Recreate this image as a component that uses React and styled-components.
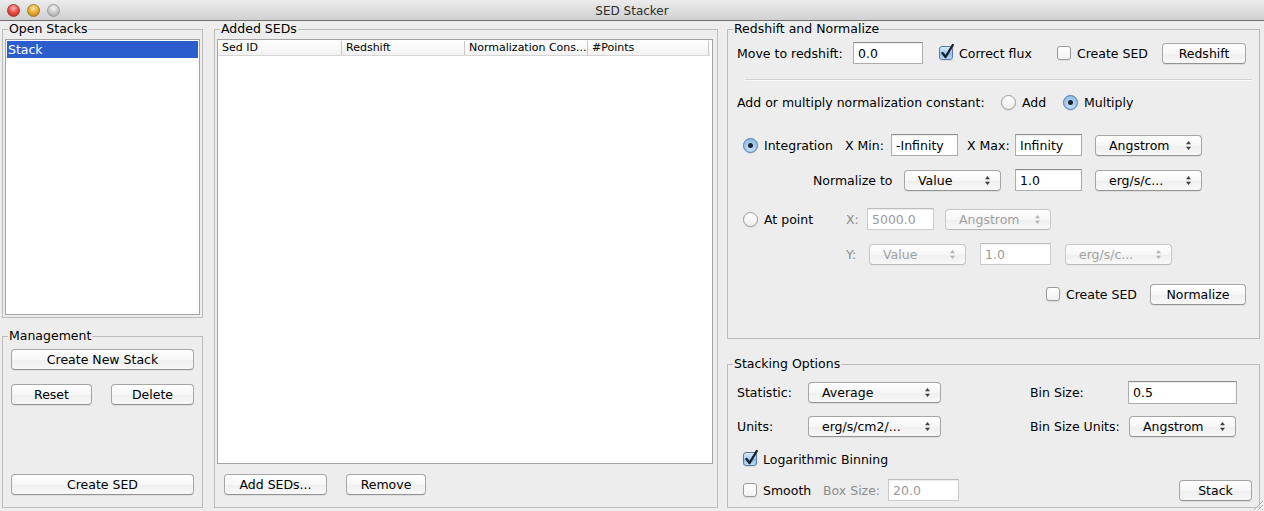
import React from 'react';
import styled, { createGlobalStyle } from 'styled-components';

const GlobalStyle = createGlobalStyle`
  html, body {
    margin: 0;
    padding: 0;
    background: #ededed;
    overflow: hidden;
  }
  body {
    font-family: "DejaVu Sans", "Liberation Sans", sans-serif;
    font-size: 12.5px;
    color: #000;
  }
  * { box-sizing: border-box; }
`;

const Window = styled.div`
  width: 1264px;
  height: 511px;
  display: flex;
  flex-direction: column;
  background: #ededed;
  position: relative;
  overflow: hidden;
`;

const TitleBar = styled.div`
  height: 21px;
  flex: none;
  display: grid;
  grid-template-columns: 1fr auto 1fr;
  align-items: center;
  background: linear-gradient(#ececec, #d0d0d0);
  border-bottom: 1px solid #6e6e6e;
`;

const Lights = styled.div`
  display: flex;
  gap: 7px;
  padding-left: 7px;
`;

const lightColors = {
  close: ['#ffb3ab', '#e2453c', '#a82a22', '#9c3a33'],
  min: ['#ffe6a0', '#e0a62c', '#ad7318', '#a57a2a'],
  zoom: ['#f4f4f4', '#c4c4c4', '#9a9a9a', '#9d9d9d'],
};

const Light = styled.span`
  width: 13px;
  height: 13px;
  border-radius: 50%;
  border: 1px solid ${p => lightColors[p.$kind][3]};
  background: radial-gradient(circle at 50% 30%, ${p => lightColors[p.$kind][0]} 0%, ${p => lightColors[p.$kind][1]} 55%, ${p => lightColors[p.$kind][2]} 100%);
`;

const Title = styled.div`
  font-size: 12px;
  color: #2e2e2e;
  padding-top: 1px;
`;

const Body = styled.div`
  flex: 1;
  display: flex;
  padding: 0 4px 3px 2px;
`;

const Column = styled.div`
  width: ${p => p.$w}px;
  margin-left: ${p => p.$ml || 0}px;
  display: flex;
  flex-direction: column;
  gap: ${p => p.$gap || 0}px;
  flex: none;
`;

const Group = styled.fieldset`
  margin: 0;
  padding: 0;
  min-width: 0;
  border: 1px solid #bcbcbc;
  height: ${p => p.$h}px;
  flex: none;
`;

const Legend = styled.legend`
  font-size: 12.5px;
  line-height: 16px;
  padding: 0 1px;
  margin-left: 5px;
  color: #000;
`;

// legend takes 16px, bottom border 1px
const GroupBody = styled.div`
  height: ${p => p.$h - 17}px;
  display: flex;
  flex-direction: column;
  padding: ${p => p.$pad};
`;

const ListBox = styled.div`
  flex: 1;
  background: #fff;
  border: 1px solid #a4a4a4;
  padding: 1px;
`;

const ListItem = styled.div`
  height: 17px;
  line-height: 17px;
  padding-left: 1px;
  background: ${p => (p.$selected ? '#2b5dcd' : 'transparent')};
  color: ${p => (p.$selected ? '#fff' : '#000')};
`;

const Table = styled.div`
  height: 425px;
  flex: none;
  background: #fff;
  border: 1px solid #a4a4a4;
  padding: 1px 2px 0 0;
  display: flex;
  flex-direction: column;
`;

const HeaderRow = styled.div`
  display: flex;
  height: 15px;
  background: linear-gradient(#ffffff, #f1f1f1);
  border-bottom: 1px solid #d6d6d6;
`;

const HeaderCell = styled.div`
  width: ${p => p.$w}px;
  flex: none;
  font-size: 11px;
  line-height: 14px;
  padding-left: 4px;
  border-right: 1px solid #c9c9c9;
  white-space: nowrap;
  overflow: hidden;
`;

const ButtonRow = styled.div`
  display: flex;
  justify-content: ${p => p.$justify || 'flex-start'};
  gap: ${p => p.$gap || 0}px;
  margin-top: ${p => p.$mt || 0}px;
  padding-left: ${p => p.$pl || 0}px;
`;

const Button = styled.button`
  font-family: inherit;
  font-size: 12.5px;
  color: #000;
  height: 21px;
  width: ${p => (p.$w ? `${p.$w}px` : '100%')};
  margin-left: ${p => (p.$ml === 'auto' ? 'auto' : `${p.$ml || 0}px`)};
  margin-top: ${p => (p.$mt === 'auto' ? 'auto' : `${p.$mt || 0}px`)};
  flex: none;
  padding: 0;
  border: 1px solid #a6a6a6;
  border-bottom-color: #929292;
  border-radius: 4px;
  background: linear-gradient(#ffffff, #f6f6f6 50%, #efefef 52%, #f8f8f8);
  box-shadow: 0 1px 1px rgba(0, 0, 0, 0.07);
`;

const Row = styled.div`
  display: flex;
  align-items: center;
  height: ${p => p.$h || 22}px;
  margin-top: ${p => p.$mt || 0}px;
  flex: none;
`;

const Label = styled.span`
  width: ${p => (p.$w ? `${p.$w}px` : 'auto')};
  margin-left: ${p => p.$ml || 0}px;
  flex: none;
  white-space: nowrap;
  color: ${p => (p.$muted ? '#8c8c8c' : '#000')};
`;

const Input = styled.input`
  font-family: inherit;
  font-size: 12.5px;
  width: ${p => p.$w}px;
  height: ${p => p.$h || 22}px;
  margin: 0 0 0 ${p => p.$ml || 0}px;
  padding: 0 0 0 4px;
  flex: none;
  background: #fff;
  color: ${p => (p.disabled ? '#9a9a9a' : '#000')};
  border: 1px solid ${p => (p.disabled ? '#cbcbcb' : '#adadad')};
  border-top-color: ${p => (p.disabled ? '#bdbdbd' : '#8c8c8c')};
  box-shadow: inset 0 1px 1px rgba(0, 0, 0, 0.08);
  outline: none;
`;

const PopUpBox = styled.div`
  width: ${p => p.$w}px;
  height: 21px;
  margin-left: ${p => p.$ml || 0}px;
  flex: none;
  display: flex;
  align-items: center;
  justify-content: space-between;
  padding: 0 9px 0 13px;
  border: 1px solid ${p => (p.$disabled ? '#c6c6c6' : '#a6a6a6')};
  border-bottom-color: ${p => (p.$disabled ? '#bcbcbc' : '#929292')};
  border-radius: 4px;
  background: linear-gradient(#ffffff, #f6f6f6 50%, #efefef 52%, #f8f8f8);
  box-shadow: 0 1px 1px rgba(0, 0, 0, ${p => (p.$disabled ? 0.03 : 0.07)});
  color: ${p => (p.$disabled ? '#a2a2a2' : '#000')};
  white-space: nowrap;
`;

const PopUp = ({ w, ml, disabled, children }) => (
  <PopUpBox $w={w} $ml={ml} $disabled={disabled}>
    <span>{children}</span>
    <svg width="7" height="11" viewBox="0 0 7 11">
      <path d="M3.5 1 L6 4.2 L1 4.2 Z M3.5 10 L6 6.8 L1 6.8 Z" fill={disabled ? '#b4b4b4' : '#404040'} />
    </svg>
  </PopUpBox>
);

const Choice = styled.label`
  display: flex;
  align-items: center;
  gap: 6px;
  width: ${p => (p.$w ? `${p.$w}px` : 'auto')};
  margin-left: ${p => p.$ml || 0}px;
  flex: none;
  white-space: nowrap;
`;

const Box = styled.span`
  position: relative;
  width: 14px;
  height: 14px;
  flex: none;
  border-radius: 3px;
  border: 1px solid ${p => (p.$on ? '#5a7aa6' : '#9a9a9a')};
  background: ${p => (p.$on
    ? 'linear-gradient(#d6e8fb, #a9ccf2 50%, #8dbbed 52%, #b8daf8)'
    : 'linear-gradient(#ffffff, #f0f0f0)')};
  box-shadow: 0 1px 1px rgba(0, 0, 0, 0.08);
`;

const Tick = styled.svg`
  position: absolute;
  left: 0;
  top: -4px;
`;

const Check = ({ checked, w, ml, children }) => (
  <Choice $w={w} $ml={ml}>
    <Box $on={checked}>
      {checked && (
        <Tick width="15" height="17" viewBox="0 0 15 17">
          <path d="M2.5 10 L5.6 14 L12.8 2" fill="none" stroke="#18202c" strokeWidth="2.4" strokeLinecap="round" strokeLinejoin="round" />
        </Tick>
      )}
    </Box>
    <span>{children}</span>
  </Choice>
);

const Circle = styled.span`
  width: 15px;
  height: 15px;
  flex: none;
  border-radius: 50%;
  display: flex;
  align-items: center;
  justify-content: center;
  border: 1px solid ${p => (p.$on ? '#5a7aa6' : '#9a9a9a')};
  background: ${p => (p.$on
    ? 'radial-gradient(circle at 50% 70%, #c9e2fb, #9cc5ef 60%, #7fb0e6)'
    : 'linear-gradient(#ffffff, #efefef)')};
  box-shadow: 0 1px 1px rgba(0, 0, 0, 0.08);
`;

const Dot = styled.span`
  width: 5px;
  height: 5px;
  border-radius: 50%;
  background: #1d2633;
`;

const Radio = ({ checked, w, ml, children }) => (
  <Choice $w={w} $ml={ml}>
    <Circle $on={checked}>{checked && <Dot />}</Circle>
    <span>{children}</span>
  </Choice>
);

const Separator = styled.div`
  height: 1px;
  margin: 15px 7px 0 8px;
  background: #d2d2d2;
  box-shadow: 0 1px 0 #f9f9f9;
  flex: none;
`;

const Grip = styled.svg`
  position: absolute;
  right: 0;
  bottom: 0;
`;

export default function App() {
  return (
    <>
      <GlobalStyle />
      <Window>
        <TitleBar>
          <Lights>
            <Light $kind="close" />
            <Light $kind="min" />
            <Light $kind="zoom" />
          </Lights>
          <Title>SED Stacker</Title>
          <div />
        </TitleBar>

        <Body>
          <Column $w={201} $gap={10}>
            <Group $h={297}>
              <Legend>Open Stacks</Legend>
              <GroupBody $h={297} $pad="2px 2px 2px 2px">
                <ListBox>
                  <ListItem $selected>Stack</ListItem>
                </ListBox>
              </GroupBody>
            </Group>

            <Group $h={180}>
              <Legend>Management</Legend>
              <GroupBody $h={180} $pad="5px 8px 12px 8px">
                <Button>Create New Stack</Button>
                <ButtonRow $justify="space-between" $mt={14}>
                  <Button $w={81}>Reset</Button>
                  <Button $w={83}>Delete</Button>
                </ButtonRow>
                <Button $mt="auto">Create SED</Button>
              </GroupBody>
            </Group>
          </Column>

          <Column $w={504} $ml={11}>
            <Group $h={487}>
              <Legend>Added SEDs</Legend>
              <GroupBody $h={487} $pad="2px 4px 0 2px">
                <Table>
                  <HeaderRow>
                    <HeaderCell $w={124}>Sed ID</HeaderCell>
                    <HeaderCell $w={123}>Redshift</HeaderCell>
                    <HeaderCell $w={123}>Normalization Cons...</HeaderCell>
                    <HeaderCell $w={121}>#Points</HeaderCell>
                  </HeaderRow>
                </Table>
                <ButtonRow $gap={19} $mt={10} $pl={7}>
                  <Button $w={103}>Add SEDs...</Button>
                  <Button $w={80}>Remove</Button>
                </ButtonRow>
              </GroupBody>
            </Group>
          </Column>

          <Column $w={533} $ml={9} $gap={17}>
            <Group $h={318}>
              <Legend>Redshift and Normalize</Legend>
              <GroupBody $h={318} $pad="5px 0 0 9px">
                <Row>
                  <Label $w={116}>Move to redshift:</Label>
                  <Input $w={70} readOnly value="0.0" />
                  <Check checked ml={16} w={118}>Correct flux</Check>
                  <Check w={105}>Create SED</Check>
                  <Button $w={84}>Redshift</Button>
                </Row>
                <Separator />
                <Row $mt={11}>
                  <Label $w={264}>Add or multiply normalization constant:</Label>
                  <Radio w={62}>Add</Radio>
                  <Radio checked>Multiply</Radio>
                </Row>
                <Row $mt={21}>
                  <Radio checked ml={6} w={102}>Integration</Radio>
                  <Label $w={46}>X Min:</Label>
                  <Input $w={67} readOnly value="-Infinity" />
                  <Label $ml={9} $w={48}>X Max:</Label>
                  <Input $w={67} readOnly value="Infinity" />
                  <PopUp ml={13} w={107}>Angstrom</PopUp>
                </Row>
                <Row $mt={13}>
                  <Label $ml={76} $w={91}>Normalize to</Label>
                  <PopUp w={97}>Value</PopUp>
                  <Input $ml={14} $w={67} readOnly value="1.0" />
                  <PopUp ml={13} w={107}>erg/s/c...</PopUp>
                </Row>
                <Row $mt={17}>
                  <Radio ml={6} w={103}>At point</Radio>
                  <Label $muted $w={21}>X:</Label>
                  <Input $w={67} disabled readOnly value="5000.0" />
                  <PopUp disabled ml={11} w={106}>Angstrom</PopUp>
                </Row>
                <Row $mt={13}>
                  <Label $muted $ml={109} $w={23}>Y:</Label>
                  <PopUp disabled w={97}>Value</PopUp>
                  <Input $ml={14} $w={71} disabled readOnly value="1.0" />
                  <PopUp disabled ml={14} w={107}>erg/s/c...</PopUp>
                </Row>
                <Row $mt={18}>
                  <Check ml={309} w={104}>Create SED</Check>
                  <Button $w={96}>Normalize</Button>
                </Row>
              </GroupBody>
            </Group>

            <Group $h={152}>
              <Legend>Stacking Options</Legend>
              <GroupBody $h={152} $pad="9px 7px 0 9px">
                <Row $h={23}>
                  <Label $w={71}>Statistic:</Label>
                  <PopUp w={133}>Average</PopUp>
                  <Label $ml={89} $w={98}>Bin Size:</Label>
                  <Input $w={109} $h={23} readOnly value="0.5" />
                </Row>
                <Row $mt={11}>
                  <Label $w={71}>Units:</Label>
                  <PopUp w={133}>erg/s/cm2/...</PopUp>
                  <Label $ml={89} $w={99}>Bin Size Units:</Label>
                  <PopUp w={107}>Angstrom</PopUp>
                </Row>
                <Row $mt={11}>
                  <Check checked ml={6}>Logarithmic Binning</Check>
                </Row>
                <Row $mt={9}>
                  <Check ml={6} w={80}>Smooth</Check>
                  <Label $muted $w={65}>Box Size:</Label>
                  <Input $w={71} disabled readOnly value="20.0" />
                  <Button $ml="auto" $w={73}>Stack</Button>
                </Row>
              </GroupBody>
            </Group>
          </Column>
        </Body>

        <Grip width="14" height="14" viewBox="0 0 14 14">
          <path d="M13 4 L4 13 M13 8 L8 13 M13 12 L12 13" stroke="#a8a8a8" strokeWidth="1" />
          <path d="M13.5 5 L5 13.5 M13.5 9 L9 13.5" stroke="#ffffff" strokeWidth="1" />
        </Grip>
      </Window>
    </>
  );
}
